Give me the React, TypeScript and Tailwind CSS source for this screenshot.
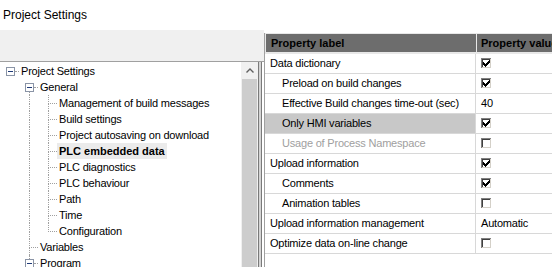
import React from "react";

type CellSpec = { box?: boolean; h?: boolean; vTop?: boolean; vBottom?: boolean };

function TreeCell({ c }: { c: CellSpec }) {
  return (
    <div className="relative w-[19px] h-[16px] shrink-0">
      {c.vTop && (
        <div
          className={
            "absolute left-[10px] top-0 w-0 border-l border-dotted border-[#a0a0a0] " +
            (c.box ? "h-[4px]" : "h-[9px]")
          }
        />
      )}
      {c.vBottom && (
        <div
          className={
            "absolute left-[10px] bottom-0 w-0 border-l border-dotted border-[#a0a0a0] " +
            (c.box ? "h-[3px]" : "h-[8px]")
          }
        />
      )}
      {c.h && (
        <div
          className={
            "absolute top-[8px] right-0 h-0 border-t border-dotted border-[#a0a0a0] " +
            (c.box ? "w-[4px]" : "w-[9px]")
          }
        />
      )}
      {c.box && (
        <div className="absolute left-[6px] top-[4px] w-[9px] h-[9px] border border-[#8a94a6] bg-white flex items-center justify-center">
          <div className="w-[5px] h-[1px] bg-[#1f3a78]" />
        </div>
      )}
    </div>
  );
}

type TreeRow = { label: string; cells: CellSpec[]; selected?: boolean };

const treeRows: TreeRow[] = [
  { label: "Project Settings", cells: [{ box: true, h: true }] },
  { label: "General", cells: [{}, { box: true, h: true, vBottom: true }] },
  ...[
    "Management of build messages",
    "Build settings",
    "Project autosaving on download",
    "PLC embedded data",
    "PLC diagnostics",
    "PLC behaviour",
    "Path",
    "Time",
  ].map((l) => ({
    label: l,
    selected: l === "PLC embedded data",
    cells: [{}, { vTop: true, vBottom: true }, { vTop: true, vBottom: true, h: true }],
  })),
  { label: "Configuration", cells: [{}, { vTop: true, vBottom: true }, { vTop: true, h: true }] },
  { label: "Variables", cells: [{}, { vTop: true, vBottom: true, h: true }] },
  { label: "Program", cells: [{}, { vTop: true, vBottom: true, box: true, h: true }] },
];

function CheckBox({ checked }: { checked: boolean }) {
  const mark: [number, number, number][] = [
    [8, 2, 1],
    [7, 3, 2],
    [2, 4, 1],
    [6, 4, 3],
    [2, 5, 2],
    [5, 5, 3],
    [2, 6, 5],
    [3, 7, 3],
    [4, 8, 1],
  ];
  return (
    <svg width="11" height="11" viewBox="0 0 11 11" shapeRendering="crispEdges">
      <rect x="0" y="0" width="11" height="11" fill="#ffffff" />
      <rect x="0" y="0" width="10" height="1" fill="#808080" />
      <rect x="0" y="0" width="1" height="10" fill="#808080" />
      <rect x="1" y="1" width="8" height="1" fill="#404040" />
      <rect x="1" y="1" width="1" height="8" fill="#404040" />
      <rect x="1" y="9" width="9" height="1" fill="#d4d0c8" />
      <rect x="9" y="1" width="1" height="9" fill="#d4d0c8" />
      {checked &&
        mark.map(([x, y, w], i) => <rect key={i} x={x} y={y} width={w} height="1" fill="#000000" />)}
    </svg>
  );
}

type PropRow = {
  label: string;
  indent: boolean;
  value: "check" | "uncheck" | string;
  selected?: boolean;
  disabled?: boolean;
};

const props: PropRow[] = [
  { label: "Data dictionary", indent: false, value: "check" },
  { label: "Preload on build changes", indent: true, value: "check" },
  { label: "Effective Build changes time-out (sec)", indent: true, value: "40" },
  { label: "Only HMI variables", indent: true, value: "check", selected: true },
  { label: "Usage of Process Namespace", indent: true, value: "uncheck", disabled: true },
  { label: "Upload information", indent: false, value: "check" },
  { label: "Comments", indent: true, value: "check" },
  { label: "Animation tables", indent: true, value: "uncheck" },
  { label: "Upload information management", indent: false, value: "Automatic" },
  { label: "Optimize data on-line change", indent: false, value: "uncheck" },
];

export default function App() {
  return (
    <div className="w-[552px] h-[267px] overflow-hidden bg-white flex flex-col font-['Liberation_Sans',Arial,sans-serif] text-black">
      <div className="h-[30px] shrink-0 flex items-center pl-[3px] text-[12px]">Project Settings</div>
      <div className="flex-1 flex min-h-0">
        <div className="w-[264px] shrink-0 flex flex-col">
          <div className="h-[32px] shrink-0 bg-[#f0f0f0] border-b border-[#a0a0a0]" />
          <div className="flex-1 flex min-h-0">
            <div className="w-[241px] shrink-0 overflow-hidden text-[11px] leading-[16px] tracking-[-0.2px] pt-[1px]">
              {treeRows.map((r, i) => (
                <div key={i} className="flex h-[16px] items-center whitespace-nowrap">
                  {r.cells.map((c, j) => (
                    <TreeCell key={j} c={c} />
                  ))}
                  <span
                    className={
                      "px-[2px] h-[16px] " + (r.selected ? "font-bold bg-[#ebebeb] tracking-normal" : "")
                    }
                  >
                    {r.label}
                  </span>
                </div>
              ))}
            </div>
            <div className="w-[17px] shrink-0 bg-[#f0f0f0] flex flex-col">
              <div className="h-[17px] shrink-0 flex items-center justify-center">
                <svg width="8" height="5" viewBox="0 0 8 5">
                  <polyline points="0.5,4.5 4,1 7.5,4.5" fill="none" stroke="#606060" strokeWidth="1.4" />
                </svg>
              </div>
              <div className="flex-1 mx-[1px] bg-[#cdcdcd]" />
            </div>
            <div className="w-[6px] shrink-0 flex">
              <div className="w-[1px] bg-[#7a7a7a]" />
              <div className="w-[2px] bg-[#d4d4d4]" />
              <div className="w-[1px] bg-[#7a7a7a]" />
              <div className="w-[2px] bg-white" />
            </div>
          </div>
        </div>
        <div className="flex-1 min-w-0 pt-[3px] flex flex-col">
          <div className="flex-1 border-l border-[#a0a0a0] overflow-hidden text-[11px] tracking-[-0.2px]">
            <div className="grid grid-cols-[211px_200px]">
              <div className="h-[21px] bg-[#6d6d6d] border-t border-l border-b-2 border-[#e8e8e8] flex items-center pl-[5px] font-bold tracking-normal">
                Property label
              </div>
              <div className="h-[21px] bg-[#6d6d6d] border-t border-l border-b-2 border-[#e8e8e8] flex items-center pl-[4px] font-bold tracking-normal whitespace-nowrap">
                Property value
              </div>
              {props.map((p, i) => (
                <React.Fragment key={i}>
                  <div
                    className={
                      "h-[20px] border-b border-r border-[#d8d8d8] flex items-center whitespace-nowrap " +
                      (p.indent ? "pl-[17px] " : "pl-[5px] ") +
                      (p.selected ? "bg-[#c8c8c8] " : "") +
                      (p.disabled ? "text-[#a0a0a0]" : "")
                    }
                  >
                    {p.label}
                  </div>
                  <div className="h-[20px] border-b border-[#d8d8d8] flex items-center pl-[5px] whitespace-nowrap">
                    {p.value === "check" ? (
                      <CheckBox checked />
                    ) : p.value === "uncheck" ? (
                      <CheckBox checked={false} />
                    ) : (
                      p.value
                    )}
                  </div>
                </React.Fragment>
              ))}
            </div>
          </div>
        </div>
      </div>
    </div>
  );
}
